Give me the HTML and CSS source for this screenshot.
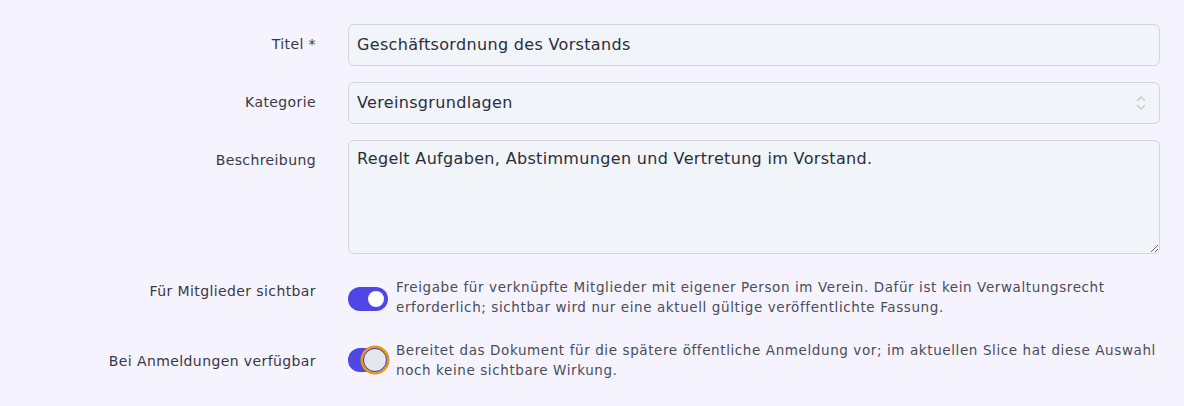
FILE: index.html
```html
<!DOCTYPE html>
<html lang="de">
<head>
<meta charset="utf-8">
<title>Dokument bearbeiten</title>
<link rel="stylesheet" href="styles.css">
</head>
<body>
<form class="form">
  <label class="label" for="titel">Titel *</label>
  <div class="field"><input id="titel" class="control" type="text" value="Geschäftsordnung des Vorstands"></div>

  <label class="label" for="kat">Kategorie</label>
  <div class="field select-wrap">
    <select id="kat" class="control select"><option>Vereinsgrundlagen</option></select>
    <svg class="chev" width="12" height="18" viewBox="0 0 12 18" aria-hidden="true"><path d="M2.5 6.5 6 3l3.5 3.5M2.5 11.5 6 15l3.5-3.5" fill="none" stroke="#c4c7ce" stroke-width="1.4" stroke-linecap="round" stroke-linejoin="round"/></svg>
  </div>

  <label class="label" for="desc">Beschreibung</label>
  <div class="field"><textarea id="desc" class="control area">Regelt Aufgaben, Abstimmungen und Vertretung im Vorstand.</textarea></div>

  <div class="label label-toggle">Für Mitglieder sichtbar</div>
  <div class="toggle-row">
    <span class="toggle"><span class="knob"></span></span>
    <p class="help">Freigabe für verknüpfte Mitglieder mit eigener Person im Verein. Dafür ist kein Verwaltungsrecht erforderlich; sichtbar wird nur eine aktuell gültige veröffentlichte Fassung.</p>
  </div>

  <div class="label label-toggle">Bei Anmeldungen verfügbar</div>
  <div class="toggle-row">
    <span class="toggle"><span class="knob knob-focus"></span></span>
    <p class="help">Bereitet das Dokument für die spätere öffentliche Anmeldung vor; im aktuellen Slice hat diese Auswahl noch keine sichtbare Wirkung.</p>
  </div>
</form>
</body>
</html>
```
FILE: styles.css
```css
html, body {
  margin: 0;
  background: #f5f3fe;
}
body {
  font-family: "DejaVu Sans", "Noto Sans", sans-serif;
  color: #374151;
}
.form {
  display: grid;
  grid-template-columns: 292px 1fr;
  column-gap: 32px;
  row-gap: 16px;
  padding: 24px 24px 0 24px;
}
.label {
  font-size: 14px;
  letter-spacing: 0.4px;
  line-height: 20px;
  text-align: right;
  padding-top: 10px;
  color: #373946;
}
.label-toggle {
  padding-top: 11px;
}
.field {
  position: relative;
}
.control {
  display: block;
  box-sizing: border-box;
  width: 100%;
  margin: 0;
  font-family: inherit;
  font-size: 16px;
  letter-spacing: 0.33px;
  line-height: 24px;
  color: #2b2e3a;
  background: #f1f4f9;
  border: 1px solid #d3d5dc;
  border-radius: 6px;
  padding: 8px 8px;
  outline: none;
}
.select {
  appearance: none;
  -webkit-appearance: none;
  height: 42px;
}
.chev {
  position: absolute;
  right: 13px;
  top: 12px;
}
.area {
  height: 114px;
  padding-top: 6px;
  resize: vertical;
}
.toggle-row {
  display: flex;
  align-items: flex-start;
  gap: 8px;
  padding-top: 7px;
}
.toggle-row + .label-toggle {
  padding-top: 18px;
}
.toggle {
  position: relative;
  flex: none;
  width: 40px;
  height: 24px;
  margin-top: 10px;
  border-radius: 12px;
  background: #4f46e5;
}
.knob {
  position: absolute;
  right: 4px;
  top: 4px;
  width: 16px;
  height: 16px;
  border-radius: 50%;
  background: #ffffff;
}
.knob-focus {
  box-sizing: border-box;
  right: 1px;
  top: 0;
  width: 24px;
  height: 24px;
  background: #e3e7ee;
  border: 1.5px solid #3f37c9;
  box-shadow: 0 0 0 2.5px #e39a12;
}
.help {
  margin: 0;
  font-size: 13.5px;
  letter-spacing: 0.6px;
  line-height: 20px;
  color: #4a4d5a;
}
.toggle-row:last-child {
  padding-top: 7px;
}
.toggle-row:last-child .toggle {
  margin-top: 8px;
}
```
